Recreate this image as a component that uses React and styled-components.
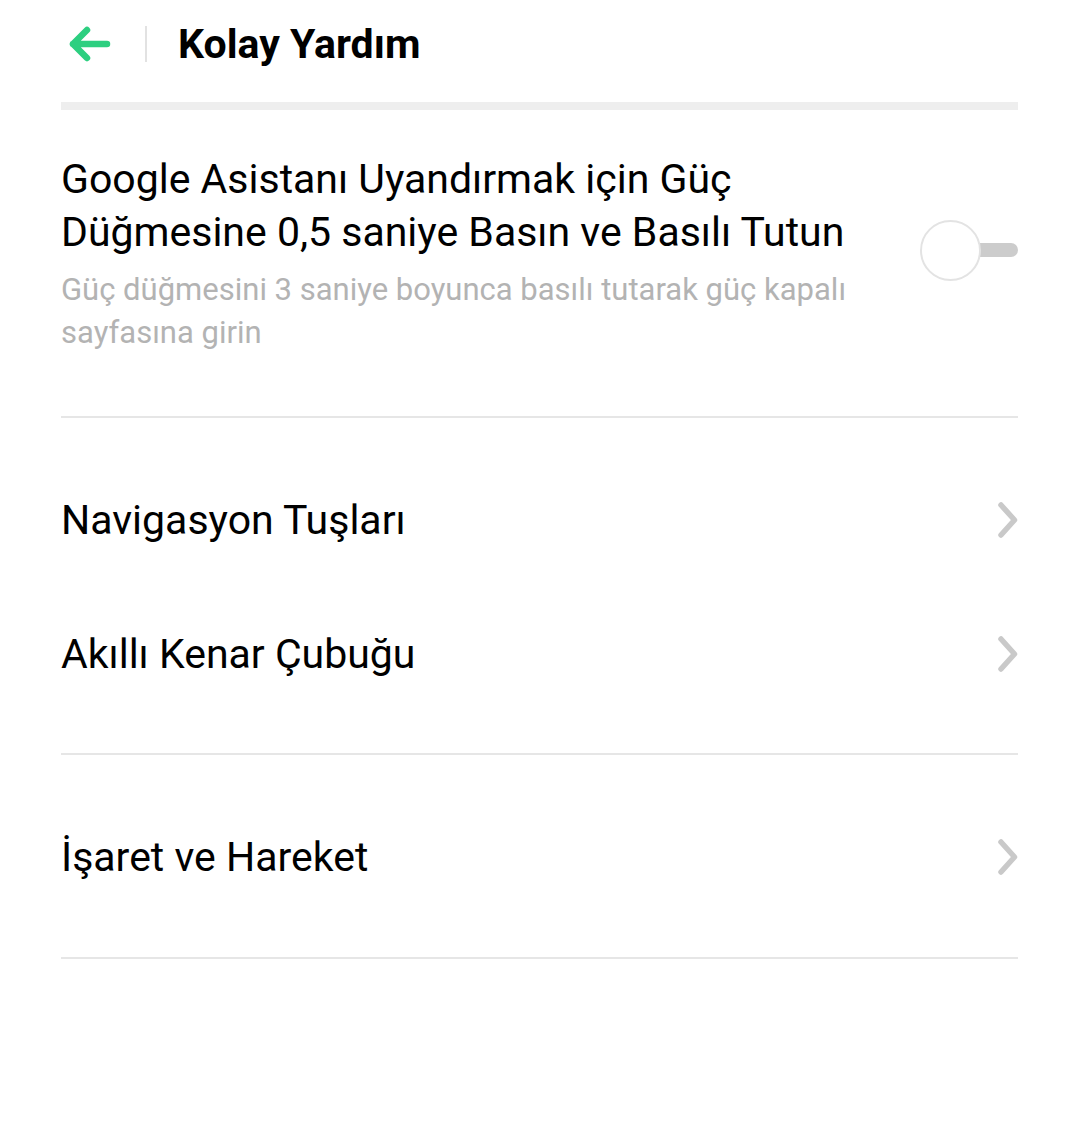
import styled, { createGlobalStyle } from "styled-components";

const GlobalStyle = createGlobalStyle`
  body {
    margin: 0;
    background: #ffffff;
    font-family: Roboto, "Noto Sans", sans-serif;
  }
`;

const Page = styled.div`
  width: 1080px;
  min-height: 1122px;
  background: #ffffff;
  padding: 0 62px 0 61px;
  box-sizing: border-box;
`;

const Header = styled.header`
  height: 88px;
  display: flex;
  align-items: center;
`;

const BackButton = styled.button`
  width: 52px;
  height: 44px;
  padding: 0 0 0 6px;
  border: none;
  background: none;
  display: flex;
  align-items: center;
  cursor: pointer;
`;

const HeaderDivider = styled.span`
  width: 2px;
  height: 36px;
  background: #e2e2e2;
  margin: 0 31px 0 32px;
`;

const Title = styled.h1`
  margin: 0;
  font-size: 41px;
  font-weight: 700;
  color: #000000;
`;

const ThickBar = styled.div`
  height: 8px;
  background: #eeeeee;
  margin-top: 14px;
`;

const ToggleSection = styled.div`
  display: flex;
  align-items: center;
  justify-content: space-between;
  padding: 43px 0 62px;
  border-bottom: 2px solid #e6e6e6;
`;

const TextBlock = styled.div`
  width: 840px;
`;

const MainText = styled.div`
  font-size: 41px;
  line-height: 53px;
  color: #000000;
`;

const SubText = styled.div`
  font-size: 31px;
  line-height: 43px;
  color: #b3b3b3;
  margin-top: 9px;
`;

const Switch = styled.div`
  position: relative;
  width: 98px;
  height: 62px;
  margin-top: -8px;
`;

const Track = styled.div`
  position: absolute;
  right: 0;
  top: 24px;
  width: 60px;
  height: 14px;
  border-radius: 7px;
  background: #cccccc;
`;

const Knob = styled.div`
  position: absolute;
  left: 0;
  top: 1px;
  width: 57px;
  height: 57px;
  border-radius: 50%;
  background: #ffffff;
  border: 2px solid #e3e3e3;
`;

const Group = styled.div`
  padding: 35px 0 ${(p) => (p.$last ? 33 : 32)}px;
  border-bottom: 2px solid #e6e6e6;
`;

const Row = styled.div`
  height: 134px;
  display: flex;
  align-items: center;
  justify-content: space-between;
  cursor: pointer;
`;

const RowLabel = styled.span`
  font-size: 41px;
  color: #000000;
`;

const ArrowIcon = () => (
  <svg width="46" height="36" viewBox="0 0 46 36">
    <path
      d="M40 18 H6 M20 4 L6 18 L20 32"
      fill="none"
      stroke="#2dcf80"
      strokeWidth="6.5"
      strokeLinecap="round"
      strokeLinejoin="round"
    />
  </svg>
);

const Chevron = () => (
  <svg width="24" height="40" viewBox="0 0 24 40">
    <path
      d="M7 5 L20.5 20 L7 35"
      fill="none"
      stroke="#c9c9c9"
      strokeWidth="5.5"
      strokeLinecap="round"
      strokeLinejoin="round"
    />
  </svg>
);

const groups = [
  ["Navigasyon Tuşları", "Akıllı Kenar Çubuğu"],
  ["İşaret ve Hareket"],
];

export default function App() {
  return (
    <Page>
      <GlobalStyle />
      <Header>
        <BackButton>
          <ArrowIcon />
        </BackButton>
        <HeaderDivider />
        <Title>Kolay Yardım</Title>
      </Header>
      <ThickBar />
      <ToggleSection>
        <TextBlock>
          <MainText>
            Google Asistanı Uyandırmak için Güç Düğmesine 0,5 saniye Basın ve Basılı Tutun
          </MainText>
          <SubText>
            Güç düğmesini 3 saniye boyunca basılı tutarak güç kapalı sayfasına girin
          </SubText>
        </TextBlock>
        <Switch>
          <Track />
          <Knob />
        </Switch>
      </ToggleSection>
      {groups.map((items, i) => (
        <Group key={i} $last={i === groups.length - 1}>
          {items.map((label) => (
            <Row key={label}>
              <RowLabel>{label}</RowLabel>
              <Chevron />
            </Row>
          ))}
        </Group>
      ))}
    </Page>
  );
}
